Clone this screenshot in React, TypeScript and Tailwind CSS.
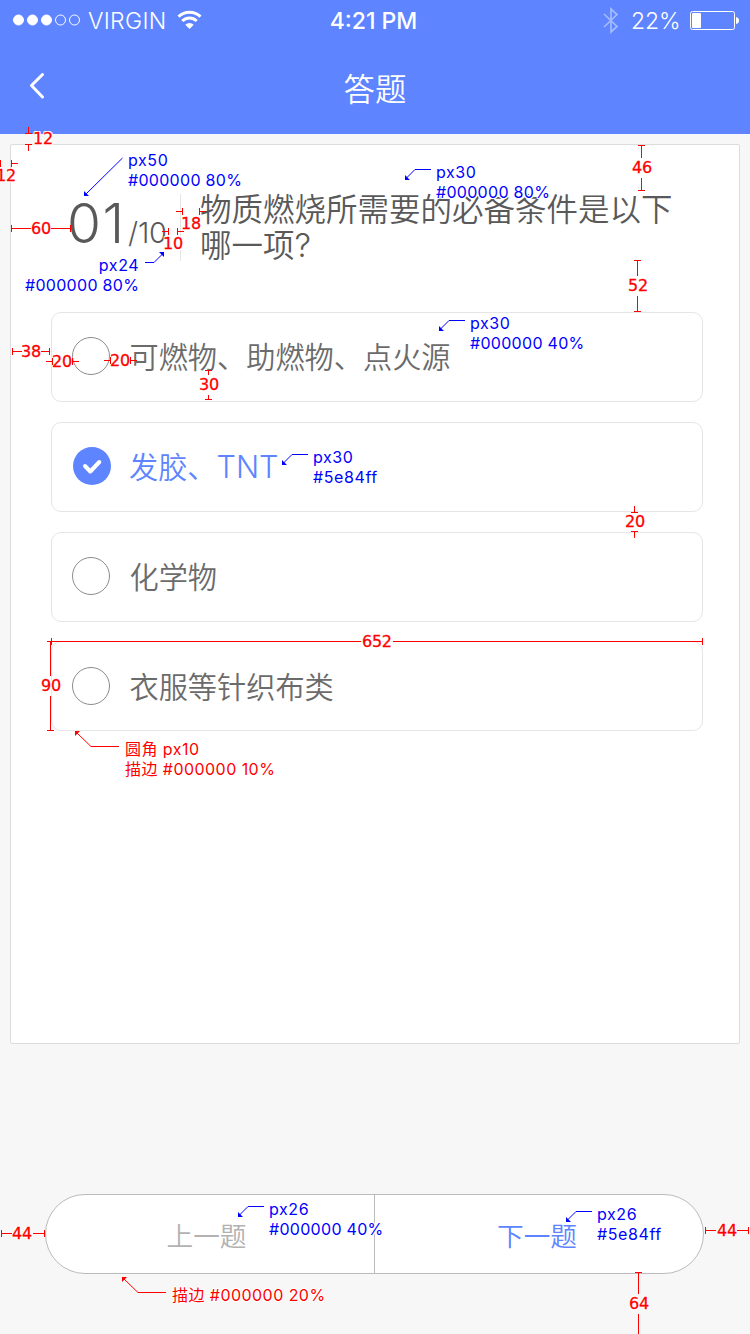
import React from "react";

const RED = "#ff0000";
const BLUE = "#0000ff";

const latin = "font-['Inter','Noto_Sans_CJK_SC',sans-serif]";
const halo =
  "[text-shadow:1px_0_#fff,-1px_0_#fff,0_1px_#fff,0_-1px_#fff,1px_1px_#fff,-1px_-1px_#fff,1px_-1px_#fff,-1px_1px_#fff]";

function StatusBar() {
  return (
    <div className={`flex h-10 items-center justify-between pl-[13px] pr-[11px] ${latin} text-white`}>
      <div className="flex w-[300px] items-center">
        <svg width="68" height="12" viewBox="0 0 68 12" fill="#fff" stroke="#fff">
          <circle cx="5.5" cy="6" r="5" />
          <circle cx="19.5" cy="6" r="5" />
          <circle cx="33.5" cy="6" r="5" />
          <circle cx="47.5" cy="6" r="5" fill="none" />
          <circle cx="61.5" cy="6" r="5" fill="none" />
        </svg>
        <span className="ml-[7px] w-[79px] whitespace-nowrap pt-[2px] text-[23px] font-[350] leading-10 tracking-[0.3px]">VIRGIN</span>
        <svg className="ml-[10px]" width="25" height="20" viewBox="0 0 25 20" fill="none" stroke="#fff" strokeWidth="3">
          <path d="M1.5 6.7 A16 16 0 0 1 23.5 6.7" />
          <path d="M5.3 11 A10.3 10.3 0 0 1 19.7 11" />
          <path d="M12.5 19 L8.3 14.8 A6 6 0 0 1 16.7 14.8 Z" fill="#fff" stroke="none" />
        </svg>
      </div>
      <span className="mr-[5px] whitespace-nowrap pt-[2px] text-[23px] font-medium leading-10">4:21 PM</span>
      <div className="flex w-[300px] items-center justify-end">
        <svg className="mr-[-1px]" width="16" height="27" viewBox="0 0 16 27" fill="none" stroke="#a5bbff" strokeWidth="1.7">
          <path d="M1 7 L14 19.5 L8 25 V2 L14 7.5 L1 20" />
        </svg>
        <span className="ml-[13px] w-[50px] whitespace-nowrap pt-[2px] text-[23px] font-[350] leading-10 tracking-[-0.1px]">22%</span>
        <svg className="ml-[9px] mr-[-1px]" width="50" height="20" viewBox="0 0 50 20">
          <rect x="0.5" y="1.5" width="44" height="18" rx="2" fill="none" stroke="#fff" />
          <rect x="2" y="3" width="9" height="15" rx="1" fill="#fff" />
          <path d="M46 7 Q49 7.5 49 10.5 Q49 13.500 46 14 Z" fill="#fff" />
        </svg>
      </div>
    </div>
  );
}

function NavBar() {
  return (
    <div className="grid h-[94px] grid-cols-[60px_1fr_60px] items-center">
      <svg className="mb-[2px] ml-[28px]" width="18" height="28" viewBox="0 0 18 28" fill="none" stroke="#fff" strokeWidth="3" strokeLinecap="round" strokeLinejoin="round">
        <path d="M14.500 2.500 L3.500 13.500 L14.500 25" />
      </svg>
      <h1 className="mt-[2px] text-center text-[31.400px] font-[350] leading-10 text-white">答题</h1>
    </div>
  );
}

type OptionProps = { children: React.ReactNode; selected?: boolean; last?: boolean };

function Option({ children, selected = false, last = false }: OptionProps) {
  return (
    <li className={`flex h-[90px] items-center rounded-[10px] border border-[#e5e5e5] pl-5 ${last ? "mt-[-1px] pt-[2px]" : ""}`}>
      {selected ? (
        <svg className="mb-[2px] ml-px mr-[-1px]" width="38" height="38" viewBox="0 0 38 38">
          <circle cx="19" cy="19" r="19" fill="#5e84ff" />
          <path d="M12 19 L17.300 24.500 L26.300 15" fill="none" stroke="#fff" strokeWidth="4" strokeLinecap="round" strokeLinejoin="round" />
        </svg>
      ) : (
        <span className="mb-[2px] size-[38px] rounded-full border border-[#8c8c8c]" />
      )}
      <span
        className={`mb-[4px] text-[29.2px] leading-10 font-[350] ${selected ? "ml-[19px] text-[#5e84ff]" : "ml-[19.5px] text-[#6b6b6b]"}`}
      >
        {children}
      </span>
    </li>
  );
}

function QuestionCard() {
  return (
    <section className="mx-[10px] mt-[10px] h-[900px] rounded-[2px] border border-[#ddd] bg-white px-10">
      <div className="flex h-[167px] pl-[17px] pt-[49px]">
        <div className="flex h-[67px] w-[113px] items-baseline whitespace-nowrap border-r border-[#e5e5e5] font-['Inter',sans-serif] font-light text-[#595959]">
          <span className="ml-[-1px] mt-[-1px] w-[61px] text-[55px] leading-[60px] tracking-[1.500px]">01</span>
          <span className="text-[29px] tracking-[-0.200px]">/10</span>
        </div>
        <h2 className="ml-[19px] mt-[-5px] w-[480px] text-[31.500px] font-[350] leading-9 text-[#595959]">
          物质燃烧所需要的必备条件是以下哪一项<span className="font-['Inter',sans-serif] text-[33px] font-light leading-none">?</span>
        </h2>
      </div>
      <ul className="mr-[-4px] flex w-[652px] flex-col gap-5">
        <Option>可燃物、助燃物、点火源</Option>
        <Option selected>
          发胶、<span className="font-['Inter',sans-serif] text-[30.500px] font-light leading-none">TNT</span>
        </Option>
        <Option>化学物</Option>
        <Option last>衣服等针织布类</Option>
      </ul>
    </section>
  );
}

function Pager() {
  return (
    <nav className="ml-[45px] mt-[150px] flex h-20 w-[659px] overflow-hidden rounded-full border border-[#bbb] bg-white text-[26.700px] font-[350]">
      <button className="w-[329px] border-r border-[#bbb] pl-[1px] pt-[3px] pr-[8px] text-[#b2b2b2]">上一题</button>
      <button className="flex-1 pr-[4px] pt-[3px] text-[#5e84ff]">下一题</button>
    </nav>
  );
}

const redLines = [
  "M25 133.500H32M28.500 127V134M25 144.500H32M28.500 144V151",
  "M.5 160V167M11.500 160V167M11 163.500H18",
  "M11.500 225V232M11 228.500H31M51 228.500H71M70.500 225V232",
  "M176 211.500H183M182.500 208V215M199.500 208V215M199 211.500H206",
  "M162 231.500H169M168.500 228V235M177.500 228V235M177 231.500H184",
  "M638 145.500H645M641.500 145V158M641.500 178V191M638 190.500H645",
  "M634 260.500H641M637.500 260V276M637.500 296V312M634 311.500H641",
  "M12.500 348V355M12 351.500H22M41 351.500H50M49.500 348V355",
  "M46 361.500H53M52.500 358V365M72.500 358V365M72 361.500H79",
  "M104 360.500H111M110.500 357V364M130.500 357V364M130 360.500H137",
  "M205 370.500H212M208.500 370V375M208.500 395V400M205 399.500H212",
  "M634.500 506V513M631 512.500H638M631 531.500H638M634.500 531V538",
  "M47 641.500H361M393 641.500H703M51.500 638V645M702.500 638V645",
  "M50.500 641V676M50.500 696V731M47 730.500H54",
  "M1.500 1230V1237M1 1233.500H12M33 1233.500H45M44.500 1230V1237",
  "M705.500 1227V1234M705 1230.500H716M737 1230.500H749M748.500 1227V1234",
  "M635 1272.500H642M638.500 1272V1294M638.500 1314V1334",
  "M119 746.500H91L76 732M166 1292.500H138L123 1278",
];

const blueLines = [
  "M122.500 158L85 195",
  "M431 169.500H415L406 178.500",
  "M145 262.500H154L163 253.500",
  "M465 320.500H449L440 329.500",
  "M308 454.500H292L283 463.500",
  "M264 1206.500H248L239 1215.500",
  "M592 1211.500H576L567 1220.500",
];

const blueHeads = [
  "M84 191V196H89Z",
  "M405 175V180H410Z",
  "M159 252H164V257Z",
  "M439 326V331H444Z",
  "M282 460V465H287Z",
  "M238 1212V1217H243Z",
  "M566 1217V1222H571Z",
];

const measures: [string, number, number][] = [
  ["12", 33, 139],
  ["12", -4, 176],
  ["60", 31, 229],
  ["18", 181, 224],
  ["10", 163, 244],
  ["46", 632, 168],
  ["52", 628, 286],
  ["38", 21, 352],
  ["20", 52, 362],
  ["20", 110, 361],
  ["30", 199, 385],
  ["20", 625, 522],
  ["652", 362, 642],
  ["90", 41, 686],
  ["44", 12, 1234],
  ["44", 717, 1231],
  ["64", 629, 1304],
];

type Note = { lines: string[]; x: number; y: number; red?: boolean; right?: boolean };

const notes: Note[] = [
  { lines: ["px50", "#000000 80%"], x: 128, y: 150 },
  { lines: ["px30", "#000000 80%"], x: 436, y: 162 },
  { lines: ["px24", "#000000 80%"], x: 25, y: 255, right: true },
  { lines: ["px30", "#000000 40%"], x: 470, y: 313 },
  { lines: ["px30", "#5e84ff"], x: 313, y: 447 },
  { lines: ["圆角 px10", "描边 #000000 10%"], x: 125, y: 739, red: true },
  { lines: ["px26", "#000000 40%"], x: 269, y: 1199 },
  { lines: ["px26", "#5e84ff"], x: 597, y: 1204 },
  { lines: ["描边 #000000 20%"], x: 172, y: 1285, red: true },
];

function Annotations() {
  return (
    <div className="pointer-events-none absolute inset-0 overflow-hidden">
      {measures.map(([text, x, y], i) => (
        <span
          key={i}
          className={`absolute -translate-y-1/2 whitespace-nowrap font-['DejaVu_Sans',sans-serif] text-[16px] leading-5 tracking-[-0.3px] text-[#ff0000] [-webkit-text-stroke:0.3px_#ff0000] ${halo}`}
          style={{ left: x, top: y }}
        >
          {text}
        </span>
      ))}
      {notes.map((note, i) => (
        <div
          key={i}
          className={`absolute whitespace-nowrap text-[16px] leading-5 ${latin} ${halo} ${note.red ? "tracking-[0.45px] text-[#ff0000]" : "tracking-[0.3px] text-[#0000ff]"} ${note.right ? "text-right" : ""}`}
          style={{ left: note.x, top: note.y }}
        >
          {note.lines.map((line) => (
            <div key={line} className={line.startsWith("px") || line === "#5e84ff" ? "tracking-[0.6px]" : ""}>
              {line}
            </div>
          ))}
        </div>
      ))}
      <svg className="absolute inset-0" width="750" height="1334" fill="none">
        <path d={redLines.join("")} stroke={RED} />
        <path d="M75 731H80L75 736ZM122 1277H127L122 1282Z" fill={RED} />
        <path d={blueLines.join("")} stroke={BLUE} />
        <path d={blueHeads.join("")} fill={BLUE} />
      </svg>
    </div>
  );
}

export default function App() {
  return (
    <div className="relative h-[1334px] w-[750px] overflow-hidden bg-[#f7f7f7] font-['Noto_Sans_CJK_SC',sans-serif]">
      <header className="h-[134px] bg-[#5e84ff]">
        <StatusBar />
        <NavBar />
      </header>
      <QuestionCard />
      <Pager />
      <Annotations />
    </div>
  );
}
